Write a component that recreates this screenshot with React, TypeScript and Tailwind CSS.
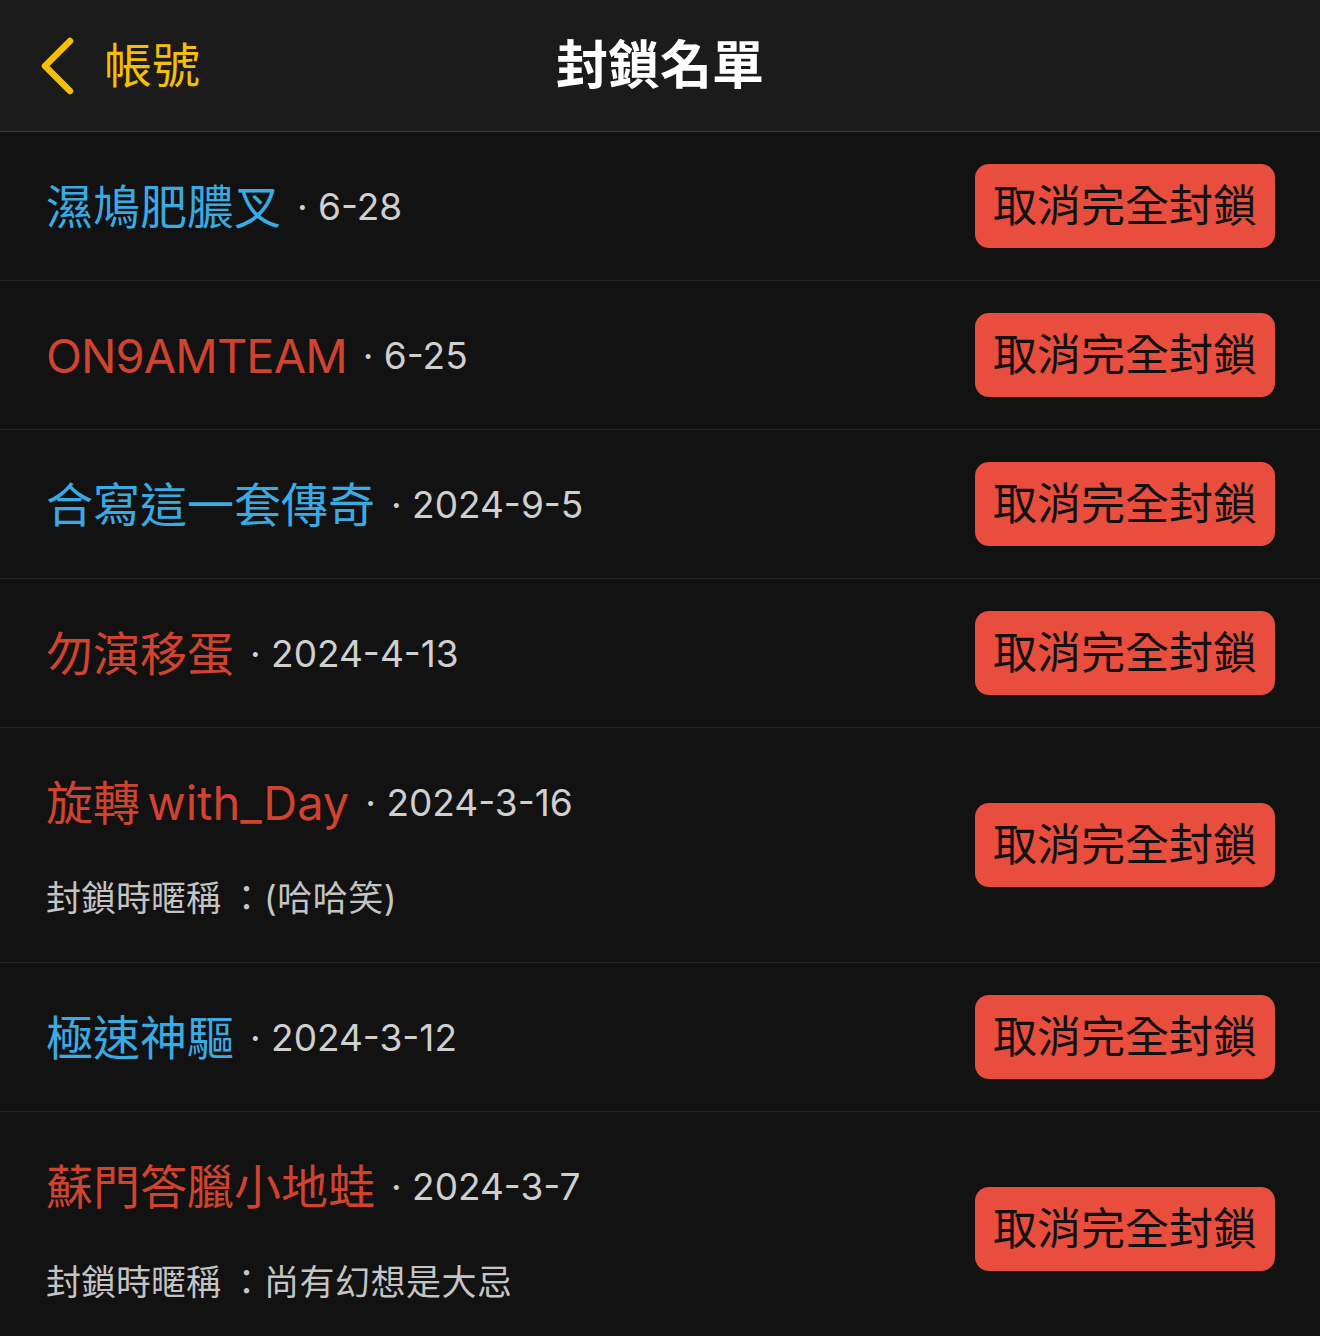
const FONT = { fontFamily: 'Inter, "Noto Sans CJK TC", sans-serif' };

type Entry = { name: string; date: string; color: 'blue' | 'red'; nick?: string };

const entries: Entry[] = [
  { name: '濕鳩肥膿叉', date: '6-28', color: 'blue' },
  { name: 'ON9AMTEAM', date: '6-25', color: 'red' },
  { name: '合寫這一套傳奇', date: '2024-9-5', color: 'blue' },
  { name: '勿演移蛋', date: '2024-4-13', color: 'red' },
  { name: '旋轉 with_Day', date: '2024-3-16', color: 'red', nick: '(哈哈笑)' },
  { name: '極速神驅', date: '2024-3-12', color: 'blue' },
  { name: '蘇門答臘小地蛙', date: '2024-3-7', color: 'red', nick: '尚有幻想是大忌' },
];

function Row({ e }: { e: Entry }) {
  const latin = /^[A-Z0-9]+$/.test(e.name);
  return (
    <div className={`flex items-center justify-between border-b border-[#262626] pl-[46px] pr-[45px] ${e.nick ? 'h-[235px]' : 'h-[149px]'}`}>
      <div className="flex flex-col">
        <div className="flex items-center h-[60px] whitespace-nowrap">
          <span
            className={`text-[47px] leading-none [word-spacing:-6px] ${latin ? 'tracking-[-0.9px]' : 'tracking-normal'} ${
              e.color === 'blue' ? 'text-[#3aaae3]' : 'text-[#d0432f]'
            }`}
          >
            {e.name}
          </span>
          <span className="text-[37px] leading-none text-[#cfcfcf] ml-[16px]">· {e.date}</span>
        </div>
        {e.nick && (
          <div className="mt-[46px] text-[35px] leading-none text-[#c4c4c4] h-[40px] flex items-center whitespace-nowrap">
            <span>封鎖時暱稱</span>
            <span className="ml-[8px]">：</span>
            <span className="tracking-[0.5px]">{e.nick}</span>
          </div>
        )}
      </div>
      <button className="w-[300px] h-[84px] rounded-[14px] bg-[#e84d3d] text-[#111] text-[44px] leading-none flex items-center justify-center">
        取消完全封鎖
      </button>
    </div>
  );
}

export default function App() {
  return (
    <div className="w-[1320px] h-[1336px] overflow-hidden bg-[#121212]" style={FONT}>
      <header className="relative h-[132px] bg-[#1b1b1b] border-b border-[#3a3a3a] flex items-center">
        <div className="flex items-center pl-[37px] text-[#f6c000]">
          <svg width="40" height="62" viewBox="0 0 40 62" fill="none">
            <path d="M33 6 L8 31 L33 56" stroke="#f6c000" strokeWidth="6.5" strokeLinecap="round" strokeLinejoin="round" />
          </svg>
          <span className="ml-[27px] text-[48px] leading-none">帳號</span>
        </div>
        <h1 className="absolute left-0 right-0 text-center text-[52px] font-bold text-white leading-none">封鎖名單</h1>
      </header>
      {entries.map((e) => (
        <Row key={e.name} e={e} />
      ))}
    </div>
  );
}
